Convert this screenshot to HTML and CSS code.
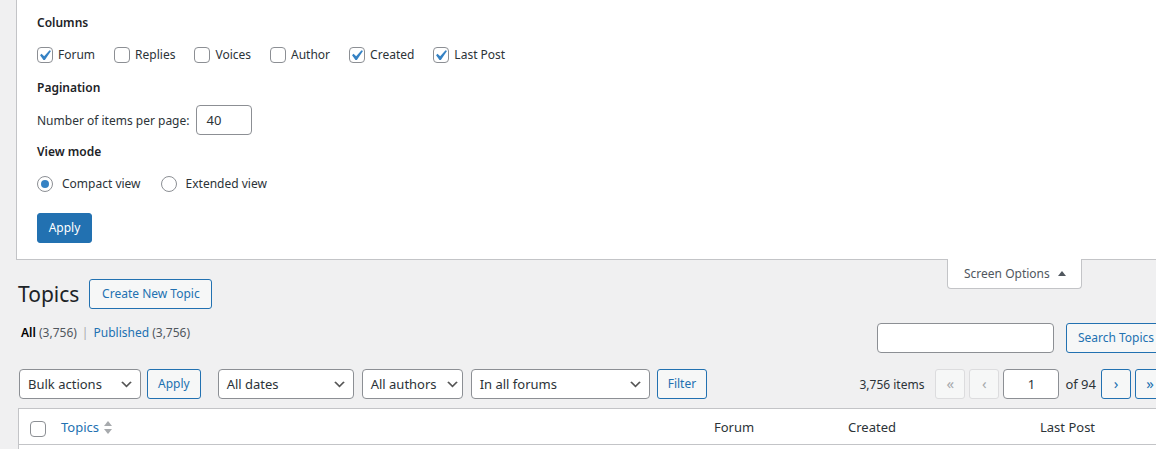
FILE: index.html
```html
<!DOCTYPE html>
<html lang="en">
<head>
<meta charset="utf-8">
<title>Topics</title>
<link rel="stylesheet" href="styles.css">
</head>
<body>
<div class="page">
  <div class="screen-meta">
    <div class="legend">Columns</div>
    <div class="opts">
      <label class="opt"><span class="cb"><svg class="check" viewBox="0 0 20 20"><path d="M14.83 4.89l1.34.94-5.81 8.38H9.02L5.78 9.67l1.34-1.25 2.57 2.4z"/></svg></span>Forum</label>
      <label class="opt"><span class="cb"></span>Replies</label>
      <label class="opt"><span class="cb"></span>Voices</label>
      <label class="opt"><span class="cb"></span>Author</label>
      <label class="opt"><span class="cb"><svg class="check" viewBox="0 0 20 20"><path d="M14.83 4.89l1.34.94-5.81 8.38H9.02L5.78 9.67l1.34-1.25 2.57 2.4z"/></svg></span>Created</label>
      <label class="opt"><span class="cb"><svg class="check" viewBox="0 0 20 20"><path d="M14.83 4.89l1.34.94-5.81 8.38H9.02L5.78 9.67l1.34-1.25 2.57 2.4z"/></svg></span>Last Post</label>
    </div>
    <div class="legend gap7">Pagination</div>
    <div class="per-page">
      <span>Number of items per page:</span>
      <span class="num-input">40</span>
    </div>
    <div class="legend gap7">View mode</div>
    <div class="opts">
      <label class="opt radio-opt"><span class="rd on"></span>Compact view</label>
      <label class="opt radio-opt"><span class="rd"></span>Extended view</label>
    </div>
    <button class="btn-primary">Apply</button>
  </div>
  <div class="so-tab">Screen Options <span class="tri"></span></div>

  <div class="wrap">
    <div class="heading">
      <h1>Topics</h1>
      <a class="btn">Create New Topic</a>
    </div>

    <div class="row-search">
      <ul class="subsubsub">
        <li><b>All</b> <span class="count">(3,756)</span></li>
        <li class="sep">|</li>
        <li><a>Published</a> <span class="count">(3,756)</span></li>
      </ul>
      <div class="search-box">
        <span class="search-input"></span>
        <a class="btn search-btn">Search Topics</a>
      </div>
    </div>

    <div class="tablenav">
      <div class="select w-bulk"><span>Bulk actions</span><svg class="chev" viewBox="0 0 20 20"><path d="M5 6l5 5 5-5 2 1-7 7-7-7 2-1z"/></svg></div>
      <a class="btn ml6">Apply</a>
      <div class="select w-dates ml17"><span>All dates</span><svg class="chev" viewBox="0 0 20 20"><path d="M5 6l5 5 5-5 2 1-7 7-7-7 2-1z"/></svg></div>
      <div class="select w-authors ml8"><span>All authors</span><svg class="chev" viewBox="0 0 20 20"><path d="M5 6l5 5 5-5 2 1-7 7-7-7 2-1z"/></svg></div>
      <div class="select w-forums ml8"><span>In all forums</span><svg class="chev" viewBox="0 0 20 20"><path d="M5 6l5 5 5-5 2 1-7 7-7-7 2-1z"/></svg></div>
      <a class="btn ml7">Filter</a>

      <div class="pagination">
        <span class="displaying-num">3,756 items</span>
        <span class="pg disabled">«</span>
        <span class="pg disabled">‹</span>
        <span class="page-input">1</span>
        <span class="total">of 94</span>
        <a class="pg">›</a>
        <a class="pg">»</a>
      </div>
    </div>

    <div class="table">
      <div class="thead">
        <div class="col-cb"><span class="cb"></span></div>
        <div class="col-title"><a class="sort-link">Topics<span class="sorting"><span class="up"></span><span class="down"></span></span></a></div>
        <div class="col-forum">Forum</div>
        <div class="col-created">Created</div>
        <div class="col-last">Last Post</div>
      </div>
      <div class="tbody-row"></div>
    </div>
  </div>
</div>
</body>
</html>
```

FILE: styles.css
```css
* { box-sizing: border-box; }

body {
  margin: 0;
  background: #f0f0f1;
  font-family: "Noto Sans", "Segoe UI", sans-serif;
  font-size: 12px;
  color: #3c434a;
  overflow: hidden;
}

.page {
  width: 1186px;
  padding: 0 20px 0 16px;
}

/* Screen options panel */
.screen-meta {
  background: #fff;
  border: 1px solid #c3c4c7;
  border-top: 0;
  padding: 13px 20px 16px;
}

.legend {
  font-weight: 600;
  line-height: 20px;
  height: 20px;
  color: #1d2327;
}

.gap7 { margin-top: 7px; }

.opts {
  display: flex;
  align-items: center;
  height: 32px;
  margin-top: 6px;
}

.opt {
  display: flex;
  align-items: center;
  margin-right: 19px;
  color: #2c3338;
  line-height: 20px;
}

.cb {
  display: block;
  position: relative;
  width: 16px;
  height: 16px;
  border: 1px solid #8c8f94;
  border-radius: 4px;
  background: #fff;
  margin-right: 5px;
  flex: none;
}

.check {
  position: absolute;
  left: -4px;
  top: -3px;
  width: 21px;
  height: 21px;
  fill: #3582c4;
}

.rd {
  width: 16px;
  height: 16px;
  border: 1px solid #8c8f94;
  border-radius: 50%;
  background: #fff;
  margin-right: 9px;
  flex: none;
  display: flex;
  align-items: center;
  justify-content: center;
}

.radio-opt + .radio-opt { margin-left: 1px; }

.rd.on::before {
  content: "";
  width: 8px;
  height: 8px;
  border-radius: 50%;
  background: #3582c4;
}

.per-page {
  display: flex;
  align-items: center;
  height: 30px;
  margin-top: 7px;
  color: #2c3338;
}

.num-input {
  width: 56px;
  height: 30px;
  margin-left: 7px;
  border: 1px solid #8c8f94;
  border-radius: 4px;
  padding: 0 9px;
  line-height: 28px;
  font-size: 13px;
  color: #2c3338;
  background: #fff;
}

.btn-primary {
  display: block;
  margin-top: 13px;
  height: 30px;
  padding: 0 10px;
  width: 55px;
  background: #2271b1;
  border: 1px solid #2271b1;
  border-radius: 3px;
  color: #fff;
  font: inherit;
  line-height: 28px;
}

/* tab */
.so-tab {
  float: right;
  margin: -1px 84px 0 0;
  width: 135px;
  height: 30px;
  background: #fff;
  border: 1px solid #c3c4c7;
  border-top: 0;
  border-radius: 0 0 4px 4px;
  display: flex;
  align-items: center;
  padding: 0 0 1px 16px;
  color: #50575e;
}

.tri {
  width: 0;
  height: 0;
  margin-left: 8px;
  border-left: 4px solid transparent;
  border-right: 4px solid transparent;
  border-bottom: 5px solid #50575e;
}

/* wrap */
.wrap {
  margin-left: 2px;
  padding-top: 19px;
}

.heading {
  display: flex;
  align-items: center;
  height: 30px;
}

h1 {
  margin: 0;
  font-size: 21px;
  font-weight: 400;
  line-height: 30px;
  color: #1d2327;
}

.btn {
  display: inline-flex;
  align-items: center;
  height: 30px;
  padding: 0 10px;
  border: 1px solid #2271b1;
  border-radius: 3px;
  background: #f6f7f7;
  color: #2271b1;
  line-height: 28px;
  white-space: nowrap;
}

.heading .btn {
  margin-left: 10px;
  width: 123px;
  justify-content: center;
  padding: 0;
}

.search-btn {
  width: 100px;
  justify-content: center;
  padding: 0;
}

.row-search {
  display: flex;
  justify-content: space-between;
  margin-top: 14px;
  height: 30px;
}

.subsubsub {
  list-style: none;
  margin: 0;
  padding: 0 0 0 3px;
  display: flex;
  line-height: 20px;
  color: #50575e;
}

.subsubsub b { color: #000; font-weight: 600; }
.subsubsub a { color: #2271b1; }
.subsubsub .sep { color: #a7aaad; margin: 0 5px; }

.search-box { display: flex; }

.search-input {
  width: 177px;
  height: 30px;
  border: 1px solid #8c8f94;
  border-radius: 4px;
  background: #fff;
  margin-right: 12px;
}

.tablenav {
  display: flex;
  align-items: center;
  margin-top: 16px;
  height: 30px;
  padding-left: 1px;
}

.select {
  display: flex;
  align-items: center;
  height: 30px;
  padding: 0 8px;
  border: 1px solid #8c8f94;
  border-radius: 4px;
  background: #fff;
  color: #2c3338;
  font-size: 13px;
}

.select span { flex: 1; white-space: nowrap; }

.chev {
  width: 15px;
  height: 15px;
  fill: #555;
  flex: none;
  margin-right: -2px;
}

.w-bulk { width: 122px; }
.w-dates { width: 136px; }
.w-authors { width: 101px; padding-right: 4px; }
.w-forums { width: 179px; }

.ml6 { margin-left: 6px; }
.ml7 { margin-left: 7px; }
.ml8 { margin-left: 8px; }
.ml17 { margin-left: 17px; }

.pagination {
  margin-left: auto;
  margin-right: 1px;
  display: flex;
  align-items: center;
  color: #2c3338;
  font-size: 12px;
}

.displaying-num { margin-right: 11px; }

.pg {
  width: 30px;
  height: 30px;
  display: flex;
  align-items: center;
  justify-content: center;
  border: 1px solid #2271b1;
  border-radius: 3px;
  background: #f6f7f7;
  color: #2271b1;
  font-size: 15px;
  margin-right: 4px;
  padding-bottom: 2px;
}

.pg:last-child { margin-right: 0; }

.pg.disabled {
  border-color: #dcdcde;
  color: #a7aaad;
}

.page-input {
  width: 56px;
  height: 30px;
  border: 1px solid #8c8f94;
  border-radius: 4px;
  background: #fff;
  text-align: center;
  line-height: 28px;
  font-size: 13px;
  color: #2c3338;
}

.total { margin: 0 5px 0 6px; font-size: 13px; }

/* table */
.table {
  margin-top: 9px;
  border: 1px solid #c3c4c7;
  background: #fff;
}

.thead {
  display: grid;
  grid-template-columns: 32px 653px 134px 192px 1fr;
  height: 36px;
  border-bottom: 1px solid #c3c4c7;
  align-items: center;
  font-size: 13px;
  color: #2c3338;
}

.thead > div { padding-left: 10px; }

.thead .col-cb {
  padding-left: 11px;
  align-self: start;
  padding-top: 12px;
}

.sort-link {
  display: inline-flex;
  align-items: center;
  color: #2271b1;
}

.sorting {
  display: inline-flex;
  flex-direction: column;
  margin-left: 5px;
  gap: 3px;
  padding-top: 1px;
}

.up, .down {
  width: 0;
  height: 0;
  border-left: 4px solid transparent;
  border-right: 4px solid transparent;
}

.up { border-bottom: 5px solid #a7aaad; }
.down { border-top: 5px solid #a7aaad; }

.tbody-row { height: 40px; }
```
